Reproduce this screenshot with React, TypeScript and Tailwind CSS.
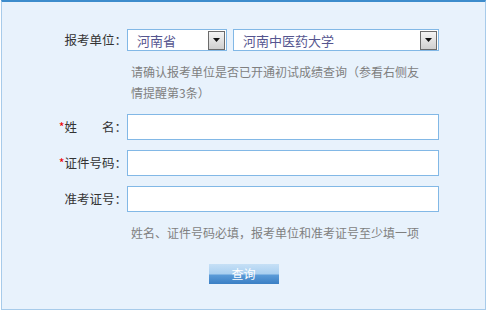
const font = { fontFamily: '"Noto Sans CJK SC", "Liberation Sans", sans-serif' };

const Arrow = () => (
  <span className="flex h-[19px] w-[17px] items-center justify-center border border-[#6b6b6b] bg-gradient-to-b from-[#f4f4f4] to-[#cfcfcf]">
    <svg width="7" height="4" viewBox="0 0 7 4">
      <path d="M0 0 H7 L3.5 4 Z" fill="#111" />
    </svg>
  </span>
);

const Select = ({ value, width }: { value: string; width: string }) => (
  <div className={`flex h-[22px] items-center justify-between border border-[#82b8e6] bg-white pl-[9px] pr-px ${width}`}>
    <span className="text-[13px] leading-none text-[#55558f]">{value}</span>
    <Arrow />
  </div>
);

const Row = ({ label, star, children }: { label: string; star?: boolean; children: React.ReactNode }) => (
  <div className="flex items-center">
    <div className="w-[125px] pr-0 text-right text-[12.5px] text-[#333]">
      {star && <span className="text-[#e00]">*</span>}
      {label}
    </div>
    {children}
  </div>
);

export default function App() {
  return (
    <div className="h-[311px] w-[489px] bg-white" style={font}>
      <div className="ml-px flex h-[310px] w-[485px] flex-col border-x border-b border-t-2 border-[#a7cbea] border-t-[#3d8ccc] bg-[#e8f2fc] pt-[27px]">
        <Row label="报考单位：">
          <div className="flex gap-[6px]">
            <Select value="河南省" width="w-[100px]" />
            <Select value="河南中医药大学" width="w-[206px]" />
          </div>
        </Row>

        <p className="ml-[127px] mt-[10px] w-[292px] pl-[2px] text-[12px] leading-[21px] text-[#7f7f7f]">
          请确认报考单位是否已开通初试成绩查询（参看右侧友情提醒第3条）
        </p>

        <div className="mt-[11px] flex flex-col gap-[10px]">
          <Row label={"姓\u3000\u3000名："} star>
            <input className="h-[26px] w-[312px] border border-[#82b8e6] bg-white outline-none" />
          </Row>
          <Row label="证件号码：" star>
            <input className="h-[26px] w-[312px] border border-[#82b8e6] bg-white outline-none" />
          </Row>
          <Row label="准考证号：">
            <input className="h-[26px] w-[312px] border border-[#82b8e6] bg-white outline-none" />
          </Row>
        </div>

        <p className="ml-[127px] mt-[10px] pl-[2px] text-[12px] leading-[21px] text-[#7f7f7f]">
          姓名、证件号码必填，报考单位和准考证号至少填一项
        </p>

        <button className="mx-auto mt-[21px] flex h-[20px] w-[70px] items-center justify-center bg-[linear-gradient(to_bottom,#c6e0f6_0%,#a9cff0_50%,#5b9bd8_55%,#3a7fc4_100%)] text-[12px] leading-none text-white">
          查询
        </button>
      </div>
    </div>
  );
}
